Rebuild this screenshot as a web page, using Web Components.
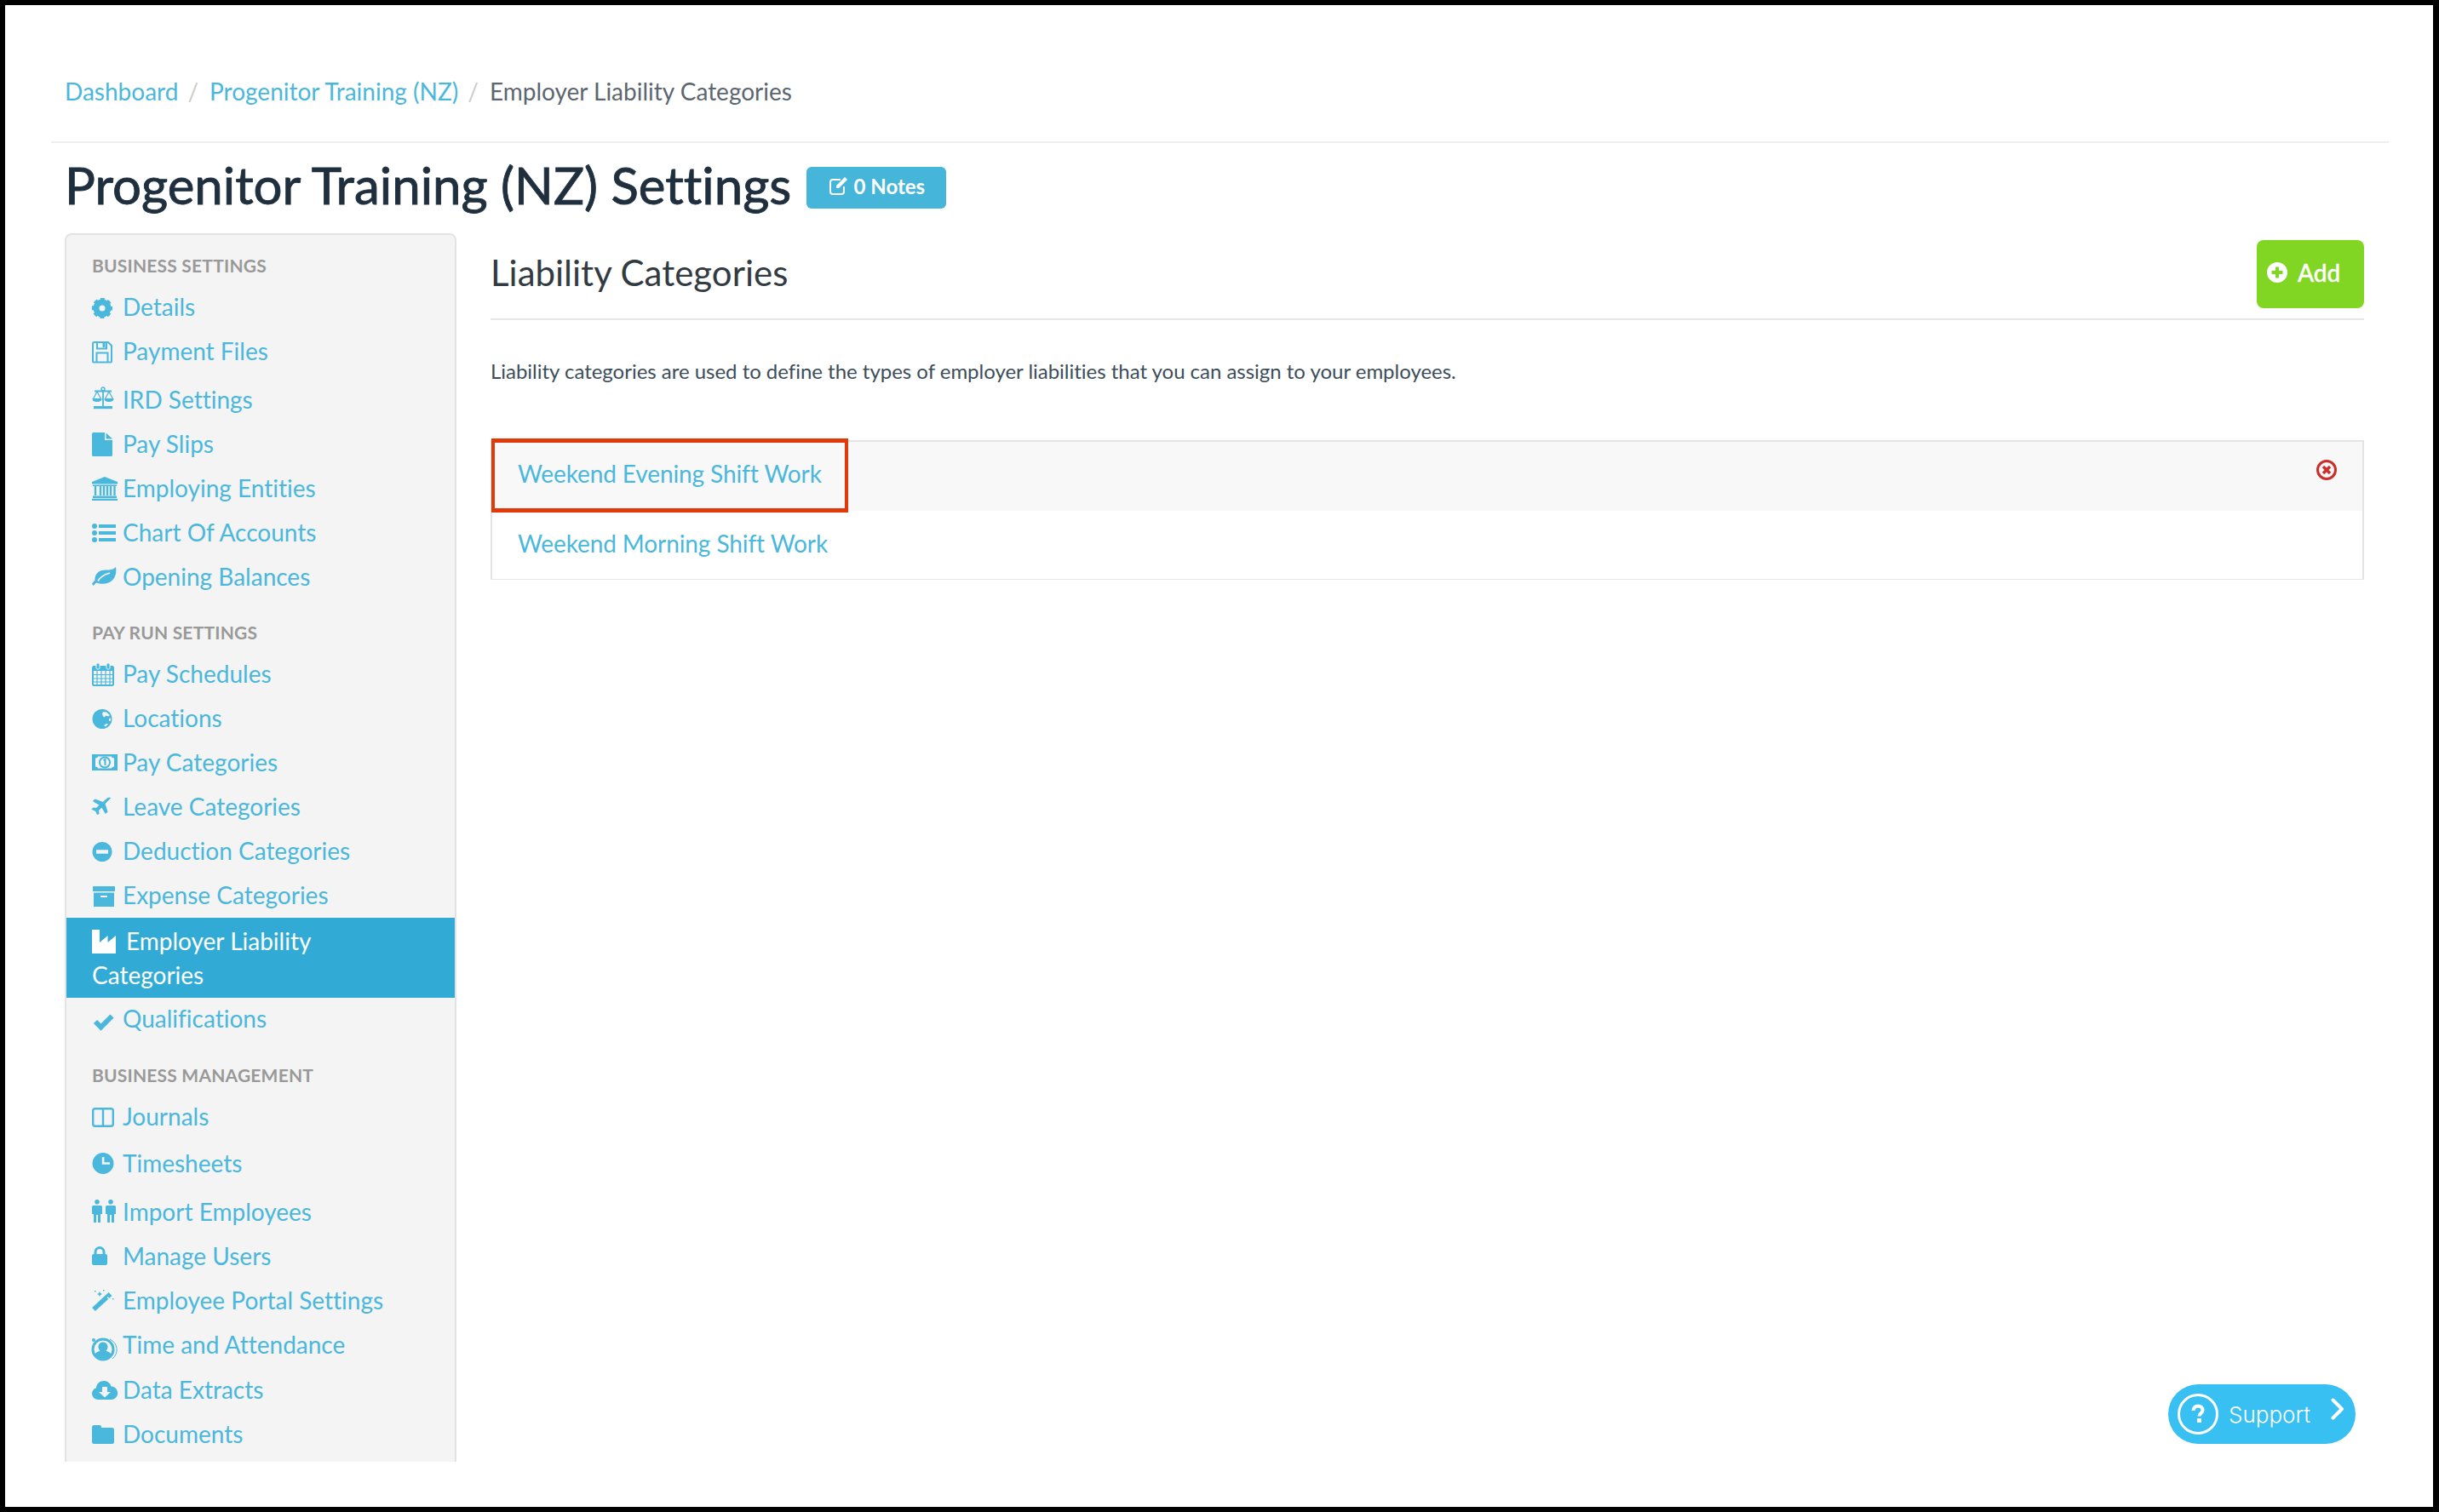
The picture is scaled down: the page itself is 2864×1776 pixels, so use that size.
<!DOCTYPE html>
<html lang="en">
<head>
<meta charset="utf-8">
<title>Progenitor Training (NZ) Settings</title>
<style>
  html, body { margin: 0; padding: 0; background: #000; }
  body { font-family: "Lato", "Liberation Sans", sans-serif; font-variant-ligatures: none; }
</style>
</head>
<body>
<app-frame>
  <bread-crumbs>
    <crumb-link>Dashboard</crumb-link>
    <crumb-link>Progenitor Training (NZ)</crumb-link>
    <crumb-link current>Employer Liability Categories</crumb-link>
  </bread-crumbs>

  <page-title notes="0 Notes">Progenitor Training (NZ) Settings</page-title>

  <settings-layout>
    <side-nav slot="side">
      <nav-group label="BUSINESS SETTINGS">
        <nav-item icon="cog">Details</nav-item>
        <nav-item icon="save">Payment Files</nav-item>
        <nav-item icon="scale" style="margin-top:5px">IRD Settings</nav-item>
        <nav-item icon="file">Pay Slips</nav-item>
        <nav-item icon="bank">Employing Entities</nav-item>
        <nav-item icon="list">Chart Of Accounts</nav-item>
        <nav-item icon="leaf">Opening Balances</nav-item>
      </nav-group>
      <nav-group label="PAY RUN SETTINGS" style="margin-top:26px">
        <nav-item icon="calendar">Pay Schedules</nav-item>
        <nav-item icon="globe">Locations</nav-item>
        <nav-item icon="money">Pay Categories</nav-item>
        <nav-item icon="plane">Leave Categories</nav-item>
        <nav-item icon="minus">Deduction Categories</nav-item>
        <nav-item icon="archive">Expense Categories</nav-item>
        <nav-item icon="industry" active style="height:94px;margin-top:1px">Employer Liability<br>Categories</nav-item>
        <nav-item icon="check" style="height:49px">Qualifications</nav-item>
      </nav-group>
      <nav-group label="BUSINESS MANAGEMENT" style="margin-top:28px">
        <nav-item icon="columns">Journals</nav-item>
        <nav-item icon="clock" style="margin-top:3px">Timesheets</nav-item>
        <nav-item icon="people" style="margin-top:5px">Import Employees</nav-item>
        <nav-item icon="lock">Manage Users</nav-item>
        <nav-item icon="wand">Employee Portal Settings</nav-item>
        <nav-item icon="user">Time and Attendance</nav-item>
        <nav-item icon="cloud" style="margin-top:1px">Data Extracts</nav-item>
        <nav-item icon="folder">Documents</nav-item>
      </nav-group>
    </side-nav>

    <liability-panel heading="Liability Categories">
      Liability categories are used to define the types of employer liabilities that you can assign to your employees.
      <liability-list slot="list">
        <liability-row selected>Weekend Evening Shift Work</liability-row>
        <liability-row>Weekend Morning Shift Work</liability-row>
      </liability-list>
    </liability-panel>
  </settings-layout>

  <support-widget>Support</support-widget>
</app-frame>

<script>
const ICONOS = {
  cog: `<circle cx="12" cy="18" r="7" fill="none" stroke="currentColor" stroke-width="7"/><circle cx="12" cy="18" r="10.800" fill="none" stroke="currentColor" stroke-width="2.600" stroke-dasharray="5 3.480" stroke-dashoffset="2.500"/>`,
  save: `<path d="M1 7.500a1.500 1.500 0 0 1 1.500-1.500H19l4 4v18.500a1 1 0 0 1-1 1H2a1 1 0 0 1-1-1z" fill="none" stroke="currentColor" stroke-width="2"/><path d="M6 6v7.500h11V6" fill="none" stroke="currentColor" stroke-width="2"/><rect x="12.500" y="7" width="3" height="5" fill="currentColor"/><path d="M5.500 29v-10.500h13V29" fill="none" stroke="currentColor" stroke-width="2"/>`,
  scale: `<circle cx="13" cy="4" r="2" fill="none" stroke="currentColor" stroke-width="1.400"/><path d="M3 6.500h20M13 6v18" stroke="currentColor" stroke-width="1.800"/><path d="M6 7l-4.500 8.500h9zM20 7l-4.500 8.500h9z" fill="none" stroke="currentColor" stroke-width="1.200"/><path d="M.5 15.500h11c0 2.500-2.500 3.500-5.500 3.500s-5.500-1-5.500-3.500zM14.500 15.500h11c0 2.500-2.500 3.500-5.500 3.500s-5.500-1-5.500-3.500z" fill="currentColor"/><rect x="2" y="24" width="22" height="3.200" fill="currentColor"/>`,
  file: `<path d="M1.500 3H15v9h9V29.500a1.500 1.500 0 0 1-1.500 1.500h-21A1.500 1.500 0 0 1 0 29.500v-25A1.500 1.500 0 0 1 1.500 3z" fill="currentColor"/><path d="M16.500 3.500l7.500 7h-7.500z" fill="currentColor"/>`,
  bank: `<path d="M15 3l15 6v2.500H0V9z" fill="currentColor"/><path d="M1 12.500h28v1.500H1zM1 25.500h28V28H1zM0 28.800h30V31H0z" fill="currentColor"/><path d="M4 14v11M10 14v11M14 14v11M18 14v11M22 14v11M26.500 14v11" stroke="currentColor" stroke-width="2.400"/>`,
  list: `<circle cx="3" cy="9" r="3" fill="currentColor"/><circle cx="3" cy="17" r="3" fill="currentColor"/><circle cx="3" cy="25" r="3" fill="currentColor"/><rect x="8" y="7" width="20" height="4" fill="currentColor"/><rect x="8" y="15" width="20" height="4" fill="currentColor"/><rect x="8" y="23" width="20" height="4" fill="currentColor"/>`,
  leaf: `<path d="M28 5c-2.500 3-7 3.500-12 3.500C8 8.500 3 13 3.500 20.500L0 24.500 1.500 27l3.500-3.500c7 2.500 14 1.500 19-3 4-4 5-10 4-15.500z" fill="currentColor"/><path d="M7 21.500c3-5 8-8 14-9.500" fill="none" stroke="#f4f4f4" stroke-width="1.800"/>`,
  calendar: `<rect x="1" y="8" width="24" height="22" rx="1.500" fill="none" stroke="currentColor" stroke-width="2"/><rect x="1" y="7" width="24" height="6" fill="currentColor"/><rect x="5" y="4" width="4" height="7" rx="1.500" fill="currentColor" stroke="#f4f4f4"/><rect x="17" y="4" width="4" height="7" rx="1.500" fill="currentColor" stroke="#f4f4f4"/><path d="M6 13v17M11 13v17M16 13v17M21 13v17M1 17.500h24M1 22h24M1 26h24" stroke="currentColor" stroke-width="1.200"/>`,
  globe: `<circle cx="12" cy="17.500" r="11.500" fill="currentColor"/><path d="M13 9l4 .5 4 3.500-2 1.500-3-1-1 2-2-1-1-3zM14 25l3-2 2 .5-3 3zM20 17l2-.5v3l-2 .5z" fill="#f4f4f4"/>`,
  money: `<rect x="0" y="7" width="30" height="19" fill="currentColor"/><path d="M4 11.500c2 0 3-1 3-2h16c0 1 1 2 3 2v10c-2 0-3 1-3 2H7c0-1-1-2-3-2z" fill="#f4f4f4"/><circle cx="15" cy="16.500" r="7" fill="currentColor"/><circle cx="15" cy="16.500" r="5" fill="#f4f4f4"/><path d="M13.500 14l2-1v7" fill="none" stroke="currentColor" stroke-width="2"/>`,
  plane: `<path d="M21.500 6.500c-1-.8-3-.3-5 1.500L13 11.500 3.500 8 1.500 10l7.500 4.500-4 4-3.500-.5L0 19.500l4.500 2 2 4.500 1.500-1.500-.5-3.500 4-4L16 24.500l2-2-3-9.500 3.500-3.500c2-2 3.500-2.800 3-3.500z" fill="currentColor" stroke="currentColor" stroke-width="1" stroke-linejoin="round"/>`,
  minus: `<path fill-rule="evenodd" d="M12 6a11.500 11.500 0 1 0 0 23 11.500 11.500 0 0 0 0-23zM5 15.200h14v4.600H5z" fill="currentColor"/>`,
  archive: `<rect x="1" y="6" width="26" height="6" rx=".5" fill="currentColor"/><path fill-rule="evenodd" d="M2 13.500h24V30H2zM10 17v2h8v-2z" fill="currentColor"/>`,
  industry: `<path d="M0 3h9v15l9.500-8v8L28 10v21H0z" fill="currentColor"/>`,
  check: `<path d="M4 19l6.500 6.500L23.500 12.500" fill="none" stroke="currentColor" stroke-width="6"/>`,
  columns: `<rect x="1.200" y="7.200" width="23.600" height="20.600" rx="2.500" fill="none" stroke="currentColor" stroke-width="2.400"/><path d="M13 7v21" stroke="currentColor" stroke-width="2.400"/>`,
  clock: `<path fill-rule="evenodd" d="M13 4a12.500 12.500 0 1 0 0 25 12.500 12.500 0 0 0 0-25zM11.800 9h2.600v6.200H21v2.600h-9.200z" fill="currentColor"/>`,
  people: `<circle cx="6" cy="4.800" r="2.800" fill="currentColor"/><path d="M1.500 9h9A1.500 1.500 0 0 1 12 10.500V19h-2v10H7v-9H5v9H2V19H0v-8.500A1.500 1.500 0 0 1 1.500 9z" fill="currentColor"/><g transform="translate(16)"><circle cx="6" cy="4.800" r="2.800" fill="currentColor"/><path d="M1.500 9h9A1.500 1.500 0 0 1 12 10.500V19h-2v10H7v-9H5v9H2V19H0v-8.500A1.500 1.500 0 0 1 1.500 9z" fill="currentColor"/></g>`,
  lock: `<rect x="0" y="14" width="18" height="13" rx="2" fill="currentColor"/><path d="M4 15v-3.500a5 5 0 0 1 10 0V15" fill="none" stroke="currentColor" stroke-width="3"/>`,
  wand: `<path d="M2 27L21.500 9" stroke="currentColor" stroke-width="5.500"/><path d="M18 12.500l2.500 2.500" stroke="#f4f4f4" stroke-width="1.200"/><path d="M9 6l1 2 2 1-2 1-1 2-1-2-2-1 2-1zM3 5h1.500v1.500H3zM13 4h1.500v1.500H13zM24 14h1.500v1.500H24z" fill="currentColor"/>`,
  user: `<circle cx="13" cy="22" r="12" fill="none" stroke="currentColor" stroke-width="3"/><path d="M13 13.500c3.500 0 5.500 2.500 5.500 5.500 0 2-1 3.500-2 4.800 2.500.8 5 2 6 3.700a11 11 0 0 1-19 0c1-1.700 3.500-2.900 6-3.700-1-1.300-2-2.800-2-4.800 0-3 2-5.500 5.500-5.500z" fill="currentColor"/><path d="M21 10a13.500 13.500 0 0 1 3 23" fill="none" stroke="currentColor"/><circle cx="2" cy="11" r="2" fill="currentColor"/>`,
  cloud: `<path fill-rule="evenodd" d="M7 28a7 7 0 0 1-2-13.700C5 9.500 9.500 6 14 6c4 0 7.500 2.500 8.500 6.500.3 0 .5 0 .8 0a7.800 7.800 0 0 1 0 15.500zM12 13v6H8l7 6.500L22 19h-4v-6z" fill="currentColor"/>`,
  folder: `<path d="M2.500 6H9a2 2 0 0 1 2 2v1h12.500A2.500 2.500 0 0 1 26 11.500v14a2.500 2.500 0 0 1-2.500 2.500h-21A2.500 2.500 0 0 1 0 25.500v-17A2.500 2.500 0 0 1 2.500 6z" fill="currentColor"/>`
};

class AppFrame extends HTMLElement {
  constructor() {
    super();
    this.attachShadow({ mode: "open" });
  }

  connectedCallback() {
    this.shadowRoot.innerHTML = `
      <style>
        :host{
          display:block;
          box-sizing:border-box;
          width:2864px;
          height:1776px;
          overflow:hidden;
          background:#fff;
          border:solid #000;
          border-width:6px 7px 6px 6px;
          color:#3c4d5a;
        }
      </style>
      <slot></slot>
    `;
  }
}

class BreadCrumbs extends HTMLElement {
  constructor() {
    super();
    this.attachShadow({ mode: "open" });
  }

  connectedCallback() {
    this.shadowRoot.innerHTML = `
      <style>
        :host{
          display:flex;
          margin:0 52px 0 54px;
          padding:87px 0 0 16px;
          height:73px;
          border-bottom:2px solid #eeeeee;
          line-height:28px;
        }
      </style>
      <slot></slot>
    `;
  }
}

class CrumbLink extends HTMLElement {
  constructor() {
    super();
    this.attachShadow({ mode: "open" });
  }

  connectedCallback() {
    const actual = this.hasAttribute("current");
    this.shadowRoot.innerHTML = `
      <style>
        :host{
          display:block;
          font-size:28px;
          color:${actual ? "#5b6670" : "#4ab7dc"};
        }
        i{
          font-style:normal;
          color:#cccccc;
          padding:0 13px 0 11px;
        }
      </style>
      <slot></slot>${actual ? "" : "<i>/</i>"}
    `;
  }
}

class PageTitle extends HTMLElement {
  constructor() {
    super();
    this.attachShadow({ mode: "open" });
  }

  connectedCallback() {
    this.shadowRoot.innerHTML = `
      <style>
        :host{
          display:flex;
          align-items:center;
          gap:18px;
          margin:14px 0 0 70px;
          height:70px;
        }
        h1{
          margin:0;
          font-size:60px;
          line-height:70px;
          font-weight:400;
          -webkit-text-stroke:.9px #1f2f3d;
          color:#1f2f3d;
        }
        span{
          display:flex;
          align-items:center;
          justify-content:center;
          gap:6px;
          width:164px;
          height:49px;
          margin-top:6px;
          border-radius:6px;
          background:#45b5d9;
          color:#fff;
          font-size:24px;
          font-weight:700;
          padding-bottom:4px;
          box-sizing:border-box;
        }
      </style>
      <h1><slot></slot></h1>
      <span>
        <svg width="24" height="24" viewBox="0 0 24 24">
          <path d="M18 13v6a3 3 0 0 1-3 3H5a3 3 0 0 1-3-3V8a3 3 0 0 1 3-3h9" fill="none" stroke="currentColor" stroke-width="2"/>
          <path d="M9 12L19 2l3 3-10 10H9z" fill="currentColor"/>
        </svg>
        ${this.getAttribute("notes")}
      </span>
    `;
  }
}

class SettingsLayout extends HTMLElement {
  constructor() {
    super();
    this.attachShadow({ mode: "open" });
  }

  connectedCallback() {
    this.shadowRoot.innerHTML = `
      <style>
        :host{
          display:grid;
          grid-template-columns:460px 2200px;
          column-gap:40px;
          margin:22px 0 0 70px;
        }
      </style>
      <slot name="side"></slot>
      <slot></slot>
    `;
  }
}

class SideNav extends HTMLElement {
  constructor() {
    super();
    this.attachShadow({ mode: "open" });
  }

  connectedCallback() {
    this.shadowRoot.innerHTML = `
      <style>
        :host{
          display:block;
          box-sizing:border-box;
          height:1443px;
          padding-top:22px;
          overflow:hidden;
          background:#f4f4f4;
          border:2px solid #e3e3e3;
          border-bottom:0;
          border-radius:8px 8px 0 0;
        }
      </style>
      <slot></slot>
    `;
  }
}

class NavGroup extends HTMLElement {
  constructor() {
    super();
    this.attachShadow({ mode: "open" });
  }

  connectedCallback() {
    this.shadowRoot.innerHTML = `
      <style>
        :host{ display:block; }
        h4{
          margin:0 0 8px;
          padding-left:30px;
          height:28px;
          line-height:28px;
          font-size:21px;
          letter-spacing:.2px;
          font-weight:700;
          color:#999999;
        }
      </style>
      <h4>${this.getAttribute("label")}</h4>
      <slot></slot>
    `;
  }
}

class NavItem extends HTMLElement {
  constructor() {
    super();
    this.attachShadow({ mode: "open" });
  }

  connectedCallback() {
    const ativo = this.hasAttribute("active");
    this.shadowRoot.innerHTML = `
      <style>
        :host{
          display:flex;
          align-items:center;
          height:52px;
          padding-left:30px;
          font-size:28px;
          color:#4ab7dc;
        }
        :host([active]){
          background:#31abd5;
          color:#fff;
        }
        a{
          display:block;
          line-height:40px;
        }
        svg{
          width:36px;
          height:36px;
          margin-right:${ativo ? 4 : 0}px;
          vertical-align:-9.5px;
          overflow:visible;
        }
      </style>
      <a><svg viewBox="0 0 36 36">${ICONOS[this.getAttribute("icon")]}</svg><slot></slot></a>
    `;
  }
}

class LiabilityPanel extends HTMLElement {
  constructor() {
    super();
    this.attachShadow({ mode: "open" });
  }

  connectedCallback() {
    this.shadowRoot.innerHTML = `
      <style>
        :host{ display:block; }
        header{
          display:flex;
          justify-content:space-between;
          align-items:center;
          padding:8px 0 12px;
          border-bottom:2px solid #e8e8e8;
        }
        h2{
          margin:0;
          font-size:42px;
          font-weight:400;
          color:#333b42;
          padding-bottom:4px;
        }
        button{
          display:flex;
          align-items:center;
          gap:12px;
          box-sizing:border-box;
          width:126px;
          height:80px;
          padding:0 0 4px 12px;
          border:0;
          border-radius:8px;
          background:#80d622;
          color:#fff;
          font:500 28px "Lato", sans-serif;
          -webkit-text-stroke:.4px #fff;
        }
        p{
          margin:43px 0 0;
          font-size:24px;
          line-height:34px;
          letter-spacing:-.02px;
          color:#3c4d5a;
        }
        ::slotted(liability-list){
          margin-top:64px;
        }
      </style>
      <header>
        <h2>${this.getAttribute("heading")}</h2>
        <button>
          <svg width="24" height="24" viewBox="0 0 24 24">
            <path fill-rule="evenodd" d="M12 0a12 12 0 1 0 0 24 12 12 0 0 0 0-24zM10 5.500h4V10h4.500v4H14v4.500h-4V14H5.500v-4H10z" fill="currentColor"/>
          </svg>
          Add
        </button>
      </header>
      <p><slot></slot></p>
      <slot name="list"></slot>
    `;
  }
}

class LiabilityList extends HTMLElement {
  constructor() {
    super();
    this.attachShadow({ mode: "open" });
  }

  connectedCallback() {
    this.shadowRoot.innerHTML = `
      <style>
        :host{
          display:block;
          box-sizing:border-box;
          height:164px;
          border:2px solid #e4e4e4;
          border-bottom-width:1px;
        }
      </style>
      <slot></slot>
    `;
  }
}

class LiabilityRow extends HTMLElement {
  constructor() {
    super();
    this.attachShadow({ mode: "open" });
  }

  connectedCallback() {
    this.shadowRoot.innerHTML = `
      <style>
        :host{
          display:flex;
          justify-content:space-between;
          align-items:flex-start;
          position:relative;
          box-sizing:border-box;
          height:81px;
          padding:21px 30px 0;
          font-size:28px;
          line-height:34px;
          letter-spacing:-.1px;
          color:#4ab7dc;
        }
        :host([selected]){
          background:#f8f8f8;
          padding-top:20px;
        }
        svg{
          margin-top:1px;
        }
        .marca{
          position:absolute;
          left:-1px;
          top:-4px;
          width:419px;
          height:87px;
          box-sizing:border-box;
          border:solid #e03a0b;
          border-width:5px 4px;
        }
      </style>
      <span><slot></slot></span>
      ${this.hasAttribute("selected") ? `
        <svg width="24" height="24" viewBox="0 0 24 24">
          <circle cx="12" cy="12" r="10.500" fill="none" stroke="#c9302c" stroke-width="3"/>
          <path d="M8 8l8 8M16 8l-8 8" stroke="#c9302c" stroke-width="3.500"/>
        </svg>
        <div class="marca"></div>
      ` : ""}
    `;
  }
}

class SupportWidget extends HTMLElement {
  constructor() {
    super();
    this.attachShadow({ mode: "open" });
  }

  connectedCallback() {
    this.shadowRoot.innerHTML = `
      <style>
        :host{
          position:fixed;
          right:98px;
          bottom:80px;
          display:flex;
          align-items:center;
          box-sizing:border-box;
          width:220px;
          height:70px;
          padding-left:11px;
          border-radius:35px;
          background:#39c0f2;
          color:#fff;
          font:300 26px "Inter", sans-serif;
        }
        span{
          margin-left:12px;
        }
        .seta{
          margin:-12px 0 0 24px;
        }
      </style>
      <svg width="48" height="48" viewBox="0 0 48 48">
        <circle cx="24" cy="24" r="22.500" fill="none" stroke="currentColor" stroke-width="3"/>
        <path d="M18.500 20c0-3.500 2.500-5.500 5.500-5.500s5.500 2 5.500 5c0 3.500-4 3.500-4 7" fill="none" stroke="currentColor" stroke-width="4"/>
        <rect x="23" y="29" width="5" height="5" fill="currentColor"/>
      </svg>
      <span><slot></slot></span>
      <svg class="seta" width="16" height="26" viewBox="0 0 16 26">
        <path d="M2.500 2.500L13 13 2.500 23.500" fill="none" stroke="currentColor" stroke-width="4" stroke-linecap="round" stroke-linejoin="round"/>
      </svg>
    `;
  }
}

customElements.define("app-frame", AppFrame);
customElements.define("bread-crumbs", BreadCrumbs);
customElements.define("crumb-link", CrumbLink);
customElements.define("page-title", PageTitle);
customElements.define("settings-layout", SettingsLayout);
customElements.define("side-nav", SideNav);
customElements.define("nav-group", NavGroup);
customElements.define("nav-item", NavItem);
customElements.define("liability-panel", LiabilityPanel);
customElements.define("liability-list", LiabilityList);
customElements.define("liability-row", LiabilityRow);
customElements.define("support-widget", SupportWidget);
</script>
</body>
</html>
